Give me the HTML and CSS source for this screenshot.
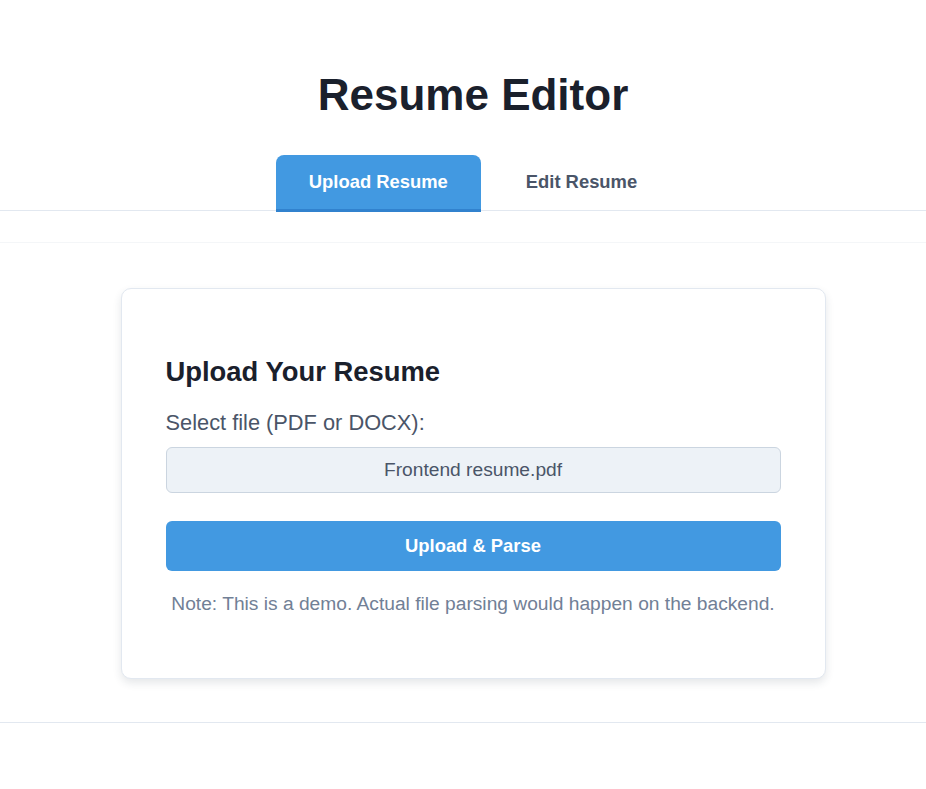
FILE: index.html
```html
<!DOCTYPE html>
<html lang="en">
<head>
<meta charset="utf-8">
<title>Resume Editor</title>
<link rel="stylesheet" href="styles.css">
</head>
<body>
<div class="app">
  <header class="header">
    <h1 class="title">Resume Editor</h1>
    <nav class="tabs">
      <button class="tab tab-active">Upload Resume</button>
      <button class="tab">Edit Resume</button>
    </nav>
  </header>
  <div class="spacer"></div>
  <main class="main">
    <section class="card">
      <h2 class="card-title">Upload Your Resume</h2>
      <label class="label">Select file (PDF or DOCX):</label>
      <div class="file-input">Frontend resume.pdf</div>
      <button class="primary-btn">Upload &amp; Parse</button>
      <p class="note">Note: This is a demo. Actual file parsing would happen on the backend.</p>
    </section>
  </main>
  <footer class="footer"></footer>
</div>
</body>
</html>
```
FILE: styles.css
```css
* { box-sizing: border-box; }
html, body { margin: 0; padding: 0; background: #ffffff; }
body {
  font-family: "Liberation Sans", Arial, sans-serif;
  color: #1a202c;
}
.app {
  padding-left: 20px;
}
.header {
  padding-top: 70px;
  display: flex;
  flex-direction: column;
  align-items: center;
  border-bottom: 1px solid #e2e8f0;
  margin-left: -20px;
  padding-left: 20px;
}
.title {
  margin: 0 0 35px 0;
  font-size: 44px;
  line-height: 50px;
  font-weight: 700;
  color: #1a202c;
}
.tabs {
  display: flex;
  gap: 12px;
  margin-bottom: -2px;
}
.tab {
  font-family: inherit;
  font-size: 18.4px;
  font-weight: 700;
  height: 57px;
  padding: 0 33px;
  border: none;
  border-bottom: 3px solid transparent;
  background: transparent;
  color: #4a5568;
  border-radius: 8px 8px 0 0;
  cursor: pointer;
}
.tab-active {
  background: #4299e1;
  color: #ffffff;
  border-bottom-color: #3182ce;
}
.spacer {
  height: 32px;
  border-bottom: 1px solid #f4f6f8;
  margin-left: -20px;
}
.main {
  padding: 45px 0 43px;
  display: flex;
  justify-content: center;
}
.card {
  width: 705px;
  background: #ffffff;
  border: 1px solid #e2e8f0;
  border-radius: 10px;
  box-shadow: 0 4px 8px rgba(45, 55, 72, 0.12);
  padding: 66px 44px 63px;
}
.card-title {
  margin: 0 0 21px;
  font-size: 27.4px;
  line-height: 34px;
  font-weight: 700;
  color: #1a202c;
}
.label {
  display: block;
  font-size: 21.8px;
  line-height: 26px;
  color: #4a5568;
  margin-bottom: 11px;
}
.file-input {
  height: 46px;
  background: #edf2f7;
  border: 1px solid #cbd5e0;
  border-radius: 6px;
  display: flex;
  align-items: center;
  justify-content: center;
  font-size: 19.2px;
  color: #4a5568;
  margin-bottom: 28px;
}
.primary-btn {
  display: block;
  width: 100%;
  height: 50px;
  border: none;
  border-radius: 6px;
  background: #4299e1;
  color: #ffffff;
  font-family: inherit;
  font-size: 18.4px;
  font-weight: 700;
}
.note {
  margin: 22px 0 0;
  text-align: center;
  font-size: 19.2px;
  line-height: 22px;
  color: #718096;
}
.footer {
  border-top: 1px solid #e2e8f0;
  height: 66px;
  margin-left: -20px;
}
```
